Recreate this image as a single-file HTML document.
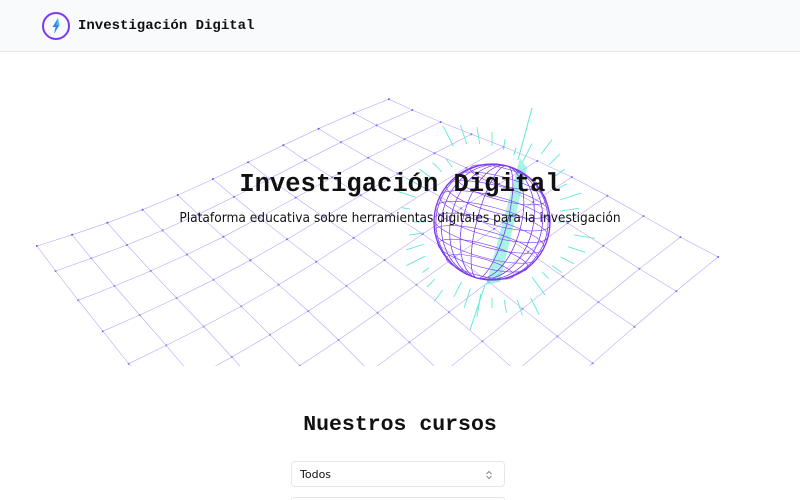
<!DOCTYPE html>
<html><head><meta charset="utf-8">
<style>
html,body{margin:0;padding:0;background:#fff;width:800px;height:500px;overflow:hidden;position:relative}
header{position:absolute;left:0;top:0;width:800px;height:52px;background:#f9fafb;border-bottom:1px solid #e5e7eb;box-sizing:border-box}
.logo{position:absolute;left:42px;top:12px;width:28px;height:28px;border:2px solid #7c3aed;border-radius:50%;box-sizing:border-box}
.brand{position:absolute;left:78px;top:18px;font:bold 14px "Liberation Mono",monospace;color:#111}
#hero{position:absolute;left:0;top:53px;width:800px;height:313px;overflow:hidden}
h1{position:absolute;left:0;width:800px;text-align:center;top:170px;margin:0;font:bold 25.5px "Liberation Mono",monospace;color:#111}
.sub{position:absolute;left:0;width:800px;text-align:center;top:210px;font:13.6px "DejaVu Sans Condensed","Liberation Sans",sans-serif;color:#111}
h2{position:absolute;left:0;width:800px;text-align:center;top:413px;margin:0;font:bold 21.5px "Liberation Mono",monospace;color:#111}
.sel{position:absolute;left:291px;top:461px;width:214px;height:26px;border:1px solid #e5e7eb;border-radius:4px;box-sizing:border-box;font:11px "DejaVu Sans","Liberation Sans",sans-serif;padding:6px 0 0 8px;color:#111}
.sel2{position:absolute;left:291px;top:497px;width:214px;height:3px;border:1px solid #e5e7eb;border-bottom:none;border-radius:4px 4px 0 0;box-sizing:border-box}
</style></head><body>
<header>
<div class="logo"><svg width="24" height="24" viewBox="0 0 24 24" style="position:absolute;left:0;top:0"><path d="M14 4 L8.5 13 L11.5 13 L10 20 L15.5 11 L12.5 11 Z" fill="#3b82f6"/><path d="M14 4 L12.5 11 L15.5 11 Z" fill="#2dd4bf"/></svg></div>
<div class="brand">Investigación Digital</div>
</header>
<div id="hero"><svg id="g" width="800" height="313" viewBox="0 53 800 313"></svg></div>
<h1>Investigación Digital</h1>
<div class="sub">Plataforma educativa sobre herramientas digitales para la investigación</div>
<h2>Nuestros cursos</h2>
<div class="sel">Todos<svg width="8" height="10" style="position:absolute;right:11px;top:8px"><path d="M1.5 4 L4 1.5 L6.5 4 M1.5 6 L4 8.5 L6.5 6" stroke="#888" fill="none" stroke-width="1"/></svg></div>
<div class="sel2"></div>
<script>
var s=document.getElementById('g'),h='';
var A=[37,241],B=[389,100],C=[718,258],D=[300,600],N=10;
function P(i,j){var u=i/N,v=j/N;v=Math.pow(v,1.15);
var x=(1-u)*(1-v)*A[0]+u*(1-v)*B[0]+u*v*C[0]+(1-u)*v*D[0];
var y=(1-u)*(1-v)*A[1]+u*(1-v)*B[1]+u*v*C[1]+(1-u)*v*D[1];
y+=6*Math.sin(u*5)+5*Math.cos(v*6);return [x,y];}
for(var i=0;i<=N;i++){var a='',b='';for(var j=0;j<=N;j++){var p=P(i,j),q=P(j,i);a+=(j?'L':'M')+p[0].toFixed(1)+' '+p[1].toFixed(1);b+=(j?'L':'M')+q[0].toFixed(1)+' '+q[1].toFixed(1);
h+='<circle cx="'+p[0].toFixed(1)+'" cy="'+p[1].toFixed(1)+'" r="1" fill="#4f46e5"/>';}
h+='<path d="'+a+'" stroke="#b9a8f8" stroke-width="0.6" fill="none"/><path d="'+b+'" stroke="#b9a8f8" stroke-width="0.6" fill="none"/>';}
var cx=492,cy=222,R=58;
for(var k=0;k<40;k++){var ang=k*9*Math.PI/180,r1=R+8+(k*37%20),r2=r1+8+(k*13%16);
h+='<line x1="'+(cx+r1*Math.cos(ang))+'" y1="'+(cy+r1*Math.sin(ang))+'" x2="'+(cx+r2*Math.cos(ang))+'" y2="'+(cy+r2*Math.sin(ang))+'" stroke="#5eead4" stroke-width="0.9"/>';}
h+='<line x1="532" y1="108" x2="518" y2="160" stroke="#5eead4"/><line x1="470" y1="330" x2="485" y2="285" stroke="#5eead4"/>';
h+='<path d="M520 158 L527 168 L500 282 L486 285 Z" fill="#5eead4" opacity="0.55"/>';
h+='<circle cx="'+cx+'" cy="'+cy+'" r="'+R+'" fill="none" stroke="#7c3aed" stroke-width="1.3"/>';
for(var k=1;k<12;k++){var rx=R*Math.abs(Math.cos(k*Math.PI/12));h+='<ellipse cx="'+cx+'" cy="'+cy+'" rx="'+rx.toFixed(1)+'" ry="'+R+'" transform="rotate(15 '+cx+' '+cy+')" fill="none" stroke="#7c3aed" stroke-width="0.6"/>';}
for(var k=1;k<10;k++){var yy=cy-R+k*R*2/10,w=Math.sqrt(R*R-(yy-cy)*(yy-cy));h+='<ellipse cx="'+cx+'" cy="'+yy+'" rx="'+w.toFixed(1)+'" ry="'+(w*0.25).toFixed(1)+'" transform="rotate(15 '+cx+' '+cy+')" fill="none" stroke="#7c3aed" stroke-width="0.6"/>';}
s.innerHTML=h;
</script>
</body></html>
